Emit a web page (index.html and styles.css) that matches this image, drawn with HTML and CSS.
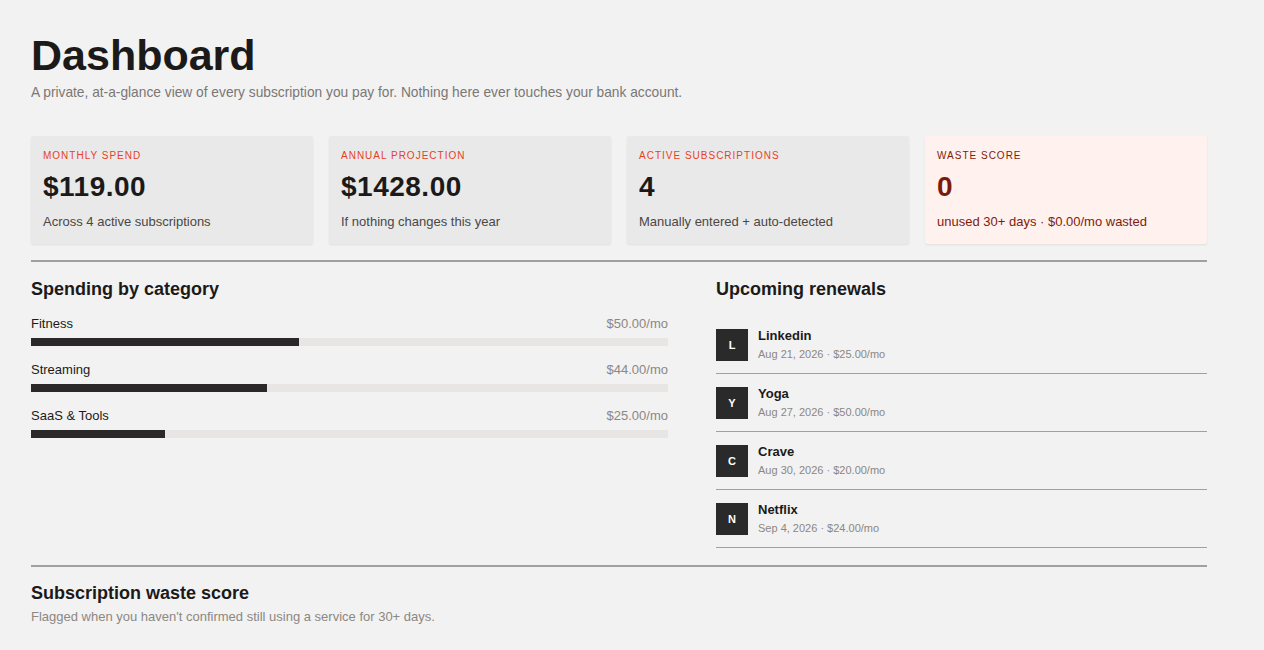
FILE: index.html
```html
<!DOCTYPE html>
<html lang="en">
<head>
    <meta charset="UTF-8">
    <meta name="viewport" content="width=device-width, initial-scale=1.0">
    <title>Dashboard</title>
    <link rel="stylesheet" href="styles.css">
</head>
<body>

    <div class="container">
        <div class="header">
            <h1>Dashboard</h1>
            <p>A private, at-a-glance view of every subscription you pay for. Nothing here ever touches your bank account.</p>
        </div>

        <!-- Stat cards -->
        <div class="stats">
            <div class="card">
                <div class="card-label">Monthly spend</div>
                <div class="card-value">$119.00</div>
                <div class="card-note">Across 4 active subscriptions</div>
            </div>
            <div class="card">
                <div class="card-label">Annual projection</div>
                <div class="card-value">$1428.00</div>
                <div class="card-note">If nothing changes this year</div>
            </div>
            <div class="card">
                <div class="card-label">Active subscriptions</div>
                <div class="card-value">4</div>
                <div class="card-note">Manually entered + auto-detected</div>
            </div>
            <div class="card waste">
                <div class="card-label">Waste score</div>
                <div class="card-value">0</div>
                <div class="card-note">unused 30+ days · $0.00/mo wasted</div>
            </div>
        </div>

        <div class="columns">
            <!-- Spending by category -->
            <div class="section">
                <h2>Spending by category</h2>
                <div class="category">
                    <div class="category-row">
                        <span>Fitness</span>
                        <span class="amount">$50.00/mo</span>
                    </div>
                    <div class="bar"><div class="bar-fill" style="width: 42%"></div></div>
                </div>
                <div class="category">
                    <div class="category-row">
                        <span>Streaming</span>
                        <span class="amount">$44.00/mo</span>
                    </div>
                    <div class="bar"><div class="bar-fill" style="width: 37%"></div></div>
                </div>
                <div class="category">
                    <div class="category-row">
                        <span>SaaS &amp; Tools</span>
                        <span class="amount">$25.00/mo</span>
                    </div>
                    <div class="bar"><div class="bar-fill" style="width: 21%"></div></div>
                </div>
            </div>

            <!-- Upcoming renewals -->
            <div class="section">
                <h2>Upcoming renewals</h2>
                <div class="renewals">
                    <div class="renewal">
                        <div class="avatar">L</div>
                        <div>
                            <div class="renewal-name">Linkedin</div>
                            <div class="renewal-meta">Aug 21, 2026 · $25.00/mo</div>
                        </div>
                    </div>
                    <div class="renewal">
                        <div class="avatar">Y</div>
                        <div>
                            <div class="renewal-name">Yoga</div>
                            <div class="renewal-meta">Aug 27, 2026 · $50.00/mo</div>
                        </div>
                    </div>
                    <div class="renewal">
                        <div class="avatar">C</div>
                        <div>
                            <div class="renewal-name">Crave</div>
                            <div class="renewal-meta">Aug 30, 2026 · $20.00/mo</div>
                        </div>
                    </div>
                    <div class="renewal">
                        <div class="avatar">N</div>
                        <div>
                            <div class="renewal-name">Netflix</div>
                            <div class="renewal-meta">Sep 4, 2026 · $24.00/mo</div>
                        </div>
                    </div>
                </div>
            </div>
        </div>

        <!-- Waste score -->
        <div class="section waste-section">
            <h2>Subscription waste score</h2>
            <p class="section-note">Flagged when you haven't confirmed still using a service for 30+ days.</p>
        </div>
    </div>

</body>
</html>
```

FILE: styles.css
```css
body {
    font-family: "Liberation Sans", Arial, sans-serif;
    background-color: #f2f2f2;
    color: #1c1a19;
    margin: 0;
    padding: 0;
}
.container {
    width: 1176px;
    padding: 30px 0 0 31px;
}
.header h1 {
    font-size: 43px;
    margin: 0;
    line-height: 50px;
}
.header p {
    font-size: 13.75px;
    color: #7a7775;
    margin: 5px 0 0;
}
.stats {
    display: grid;
    grid-template-columns: repeat(4, 1fr);
    gap: 16px;
    margin-top: 36px;
}
.card {
    background: #e9e9e9;
    padding: 14px 12px 15px;
    box-shadow: 0 1px 2px rgba(0, 0, 0, 0.08);
    border-radius: 2px;
}
.card-label {
    font-size: 10px;
    text-transform: uppercase;
    letter-spacing: 1px;
    color: #e8411f;
}
.card-value {
    font-size: 28px;
    font-weight: bold;
    letter-spacing: 0.5px;
    margin-top: 10px;
    line-height: 32px;
}
.card-note {
    font-size: 13px;
    color: #4a4745;
    margin-top: 11px;
}
.card.waste {
    background: #fff1ee;
}
.card.waste .card-label,
.card.waste .card-note {
    color: #7e1c0c;
}
.card.waste .card-value {
    color: #7a1a0a;
}
.columns {
    display: grid;
    grid-template-columns: 637px 1fr;
    gap: 48px;
    border-top: 2px solid #a0a0a0;
    margin-top: 16px;
    padding-top: 16px;
    padding-bottom: 17px;
}
.section h2 {
    font-size: 18px;
    margin: 0 0 16px;
    line-height: 22px;
}
.category {
    margin-bottom: 16px;
}
.category-row {
    display: flex;
    justify-content: space-between;
    font-size: 13px;
    line-height: 16px;
    margin-bottom: 6px;
}
.amount {
    color: #8c8782;
}
.bar {
    height: 8px;
    background: #e7e6e4;
}
.bar-fill {
    height: 100%;
    background: #2a2829;
}
.renewals {
    margin-top: 10px;
}
.renewal {
    display: flex;
    align-items: center;
    gap: 10px;
    padding: 13px 0 12px;
    border-bottom: 1px solid #a0a0a0;
}
.avatar {
    width: 32px;
    height: 32px;
    background: #2b2a2b;
    color: #fff;
    font-size: 11px;
    font-weight: bold;
    display: flex;
    align-items: center;
    justify-content: center;
}
.renewal-name {
    font-size: 13px;
    font-weight: bold;
    line-height: 14px;
}
.renewal-meta {
    font-size: 11px;
    line-height: 13px;
    color: #8c8782;
    margin-top: 5px;
}
.waste-section {
    border-top: 2px solid #a0a0a0;
    padding-top: 15px;
}
.waste-section h2 {
    margin-bottom: 5px;
}
.section-note {
    font-size: 13px;
    line-height: 16px;
    color: #8c8782;
    margin: 0;
}
```
